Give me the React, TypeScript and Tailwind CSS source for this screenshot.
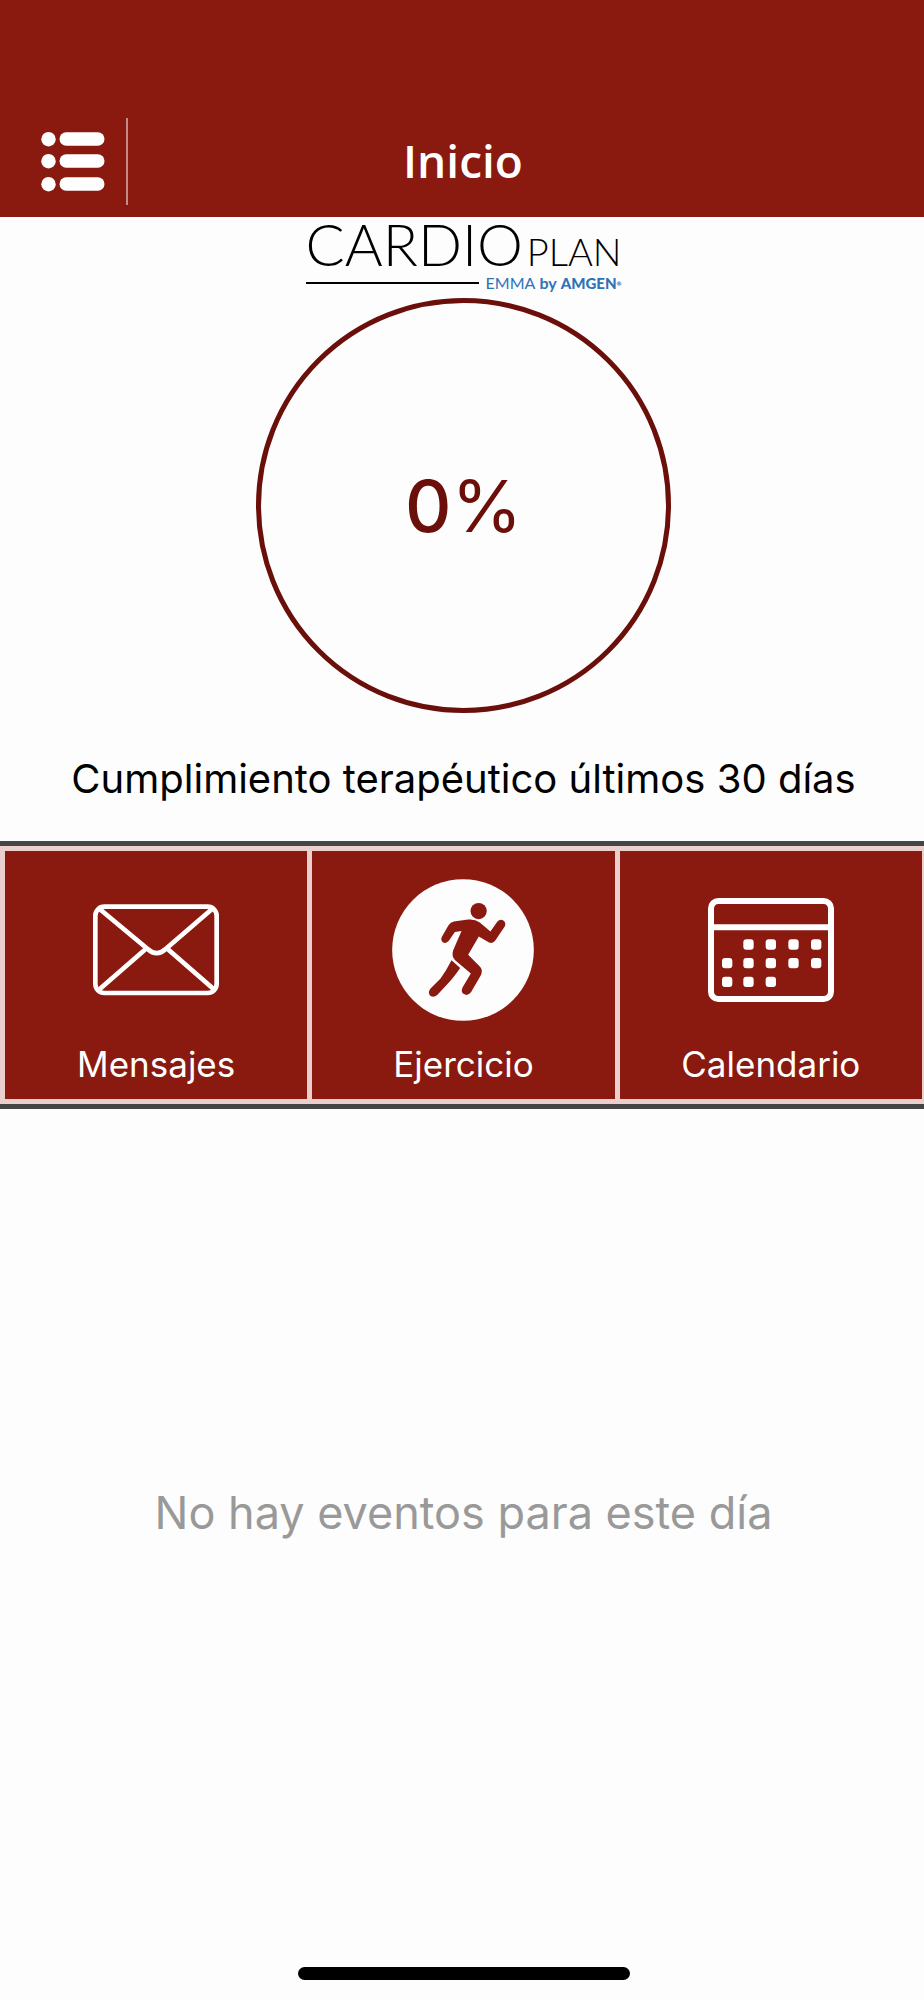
const DAY_ROWS = [
    { y: 328, columns: [400, 467, 535, 603] },
    { y: 384, columns: [336, 400, 467, 535, 603] },
    { y: 440, columns: [336, 400, 467] },
];

const MENU_ROWS = [0, 22, 45];

function MenuIcon() {
    return (
        <svg width="64" height="60" viewBox="0 0 64 60" fill="white" aria-hidden="true">
            {
                MENU_ROWS.map((y) => (
                    <g key={y}>
                        <circle cx="7.5" cy={y + 7.2} r="7.2" />
                        <rect x="18.5" y={y + 0.3} width="45" height="13.4" rx="6.7" />
                    </g>))
            }
        </svg>
    )
}

function MailIcon() {
    return (
        <svg width="126" height="92" viewBox="279 222 378 276" fill="none" stroke="white" strokeWidth="14" aria-hidden="true">
            <rect x="286" y="230" width="364" height="259" rx="27" />
            <path d="M298 236 L443 357 Q470 382 497 357 L637 236" />
            <path d="M295 481 L438 356 M645 481 L502 356" />
        </svg>
    )
}

function RunnerIcon() {
    return (
        <svg width="142" height="142" viewBox="276 146 427 427" aria-hidden="true">
            <circle cx="489.5" cy="359.5" r="213" fill="#fdfdfd" />
            <g fill="#8a190f">
                <circle cx="536.5" cy="242.5" r="24.5" />
                <path d="M426 320 L446 285 Q452 276 462 274 L505 268 Q525 266 540 277 L572 304 L593 274 Q601 265 611 271 Q620 278 615 289 L586 332 Q579 341 568 337 L537 319 L505 374 L540 409 Q550 419 544 434 L514 486 Q504 499 492 492 Q482 486 488 472 L513 430 L466 390 Q454 378 460 360 L485 302 L465 305 L447 332 Q438 342 429 336 Q421 330 426 320 Z" />
                <path d="M455 390 L481 414 Q460 445 440 465 L412 495 Q400 505 390 496 Q383 485 392 475 L422 445 Q440 420 455 390 Z" />
            </g>
        </svg>
    )
}

function CalendarIcon() {
    return (
        <svg width="126" height="104" viewBox="294 204 378 312" aria-hidden="true">
            <g fill="none" stroke="white" strokeWidth="18">
                <rect x="303" y="213" width="360" height="294" rx="22" />
                <path d="M303 292 H663" />
            </g>
            {
                DAY_ROWS.map((row) => row.columns.map((x) => (
                    <rect key={`${x}-${row.y}`} x={x} y={row.y} width="31" height="31" rx="9" fill="white" />)))
            }
        </svg>
    )
}

const ACTIONS = [
    { label: 'Mensajes', icon: <MailIcon /> },
    { label: 'Ejercicio', icon: <RunnerIcon /> },
    { label: 'Calendario', icon: <CalendarIcon /> },
];

function Header() {
    return (
        <header className="grid grid-cols-[128px_1fr_126px] items-center bg-[#8a190f] pt-[118px] pb-3">
            <div className="flex h-[87px] items-center justify-end border-r-2 border-[#c58c87] pr-[21px]">
                <button type="button" aria-label="Menú" className="cursor-pointer">
                    <MenuIcon />
                </button>
            </div>
            <h1 className="pb-1 text-center font-['Open_Sans',sans-serif] text-[46px] leading-[56px] font-semibold text-white">Inicio</h1>
        </header>
    )
}

function Logo() {
    return (
        <div className="w-[316px] pb-1 font-['Lato',sans-serif] text-black">
            <p className="flex h-[54px] items-baseline justify-between text-[58px] leading-[54px] font-light">
                CARDIO <span className="text-[38px]">PLAN</span>
            </p>
            <div className="flex items-center justify-between">
                <span className="h-[2px] w-[173px] bg-black"></span>
                <p className="flex h-[23px] items-baseline gap-1 text-[16px] leading-[23px] text-[#2f72b7]">
                    EMMA <span className="font-bold">by</span>
                    <span className="text-[15px] font-black">AMGEN<sup className="text-[6px]">®</sup></span>
                </p>
            </div>
        </div>
    )
}

export default function App() {
    return (
        <div className="flex min-h-screen flex-col bg-[#fdfdfd] font-['Inter',sans-serif]">
            <Header />
            <main className="flex flex-1 flex-col">
                <section className="flex flex-col items-center pl-[3px]">
                    <Logo />
                    <div className="flex size-[415px] items-center justify-center rounded-full border-5 border-[#6b0f0a]">
                        <p className="text-[72px] leading-[80px] text-[#6b0f0a]">
                            <span className="font-medium">0</span>%
                        </p>
                    </div>
                    <p className="pt-[42px] pb-[38px] text-center text-[40px] leading-[48px] text-black">Cumplimiento terapéutico últimos 30 días</p>
                </section>
                <nav className="grid grid-cols-3 gap-[5px] border-y-5 border-[#454545] bg-[#ebcfcf] py-[5px] pr-[2px] pl-[5px]">
                    {
                        ACTIONS.map((action) => (
                            <button key={action.label} type="button"
                                className="flex cursor-pointer flex-col items-center gap-[23px] bg-[#8a190f] pt-7 pb-[15px] text-white">
                                <span className="flex h-[142px] items-center">{action.icon}</span>
                                <span className="text-[35px] leading-10">{action.label}</span>
                            </button>))
                    }
                </nav>
                <section className="flex flex-1 items-center justify-center pl-[3px]">
                    <p className="text-center text-[45px] leading-[56px] text-[#999999]">No hay eventos para este día</p>
                </section>
            </main>
            <footer className="flex justify-center pt-[50px] pb-5 pl-[3px]">
                <div className="h-[13px] w-[332px] rounded-full bg-black"></div>
            </footer>
        </div>
    )
}
